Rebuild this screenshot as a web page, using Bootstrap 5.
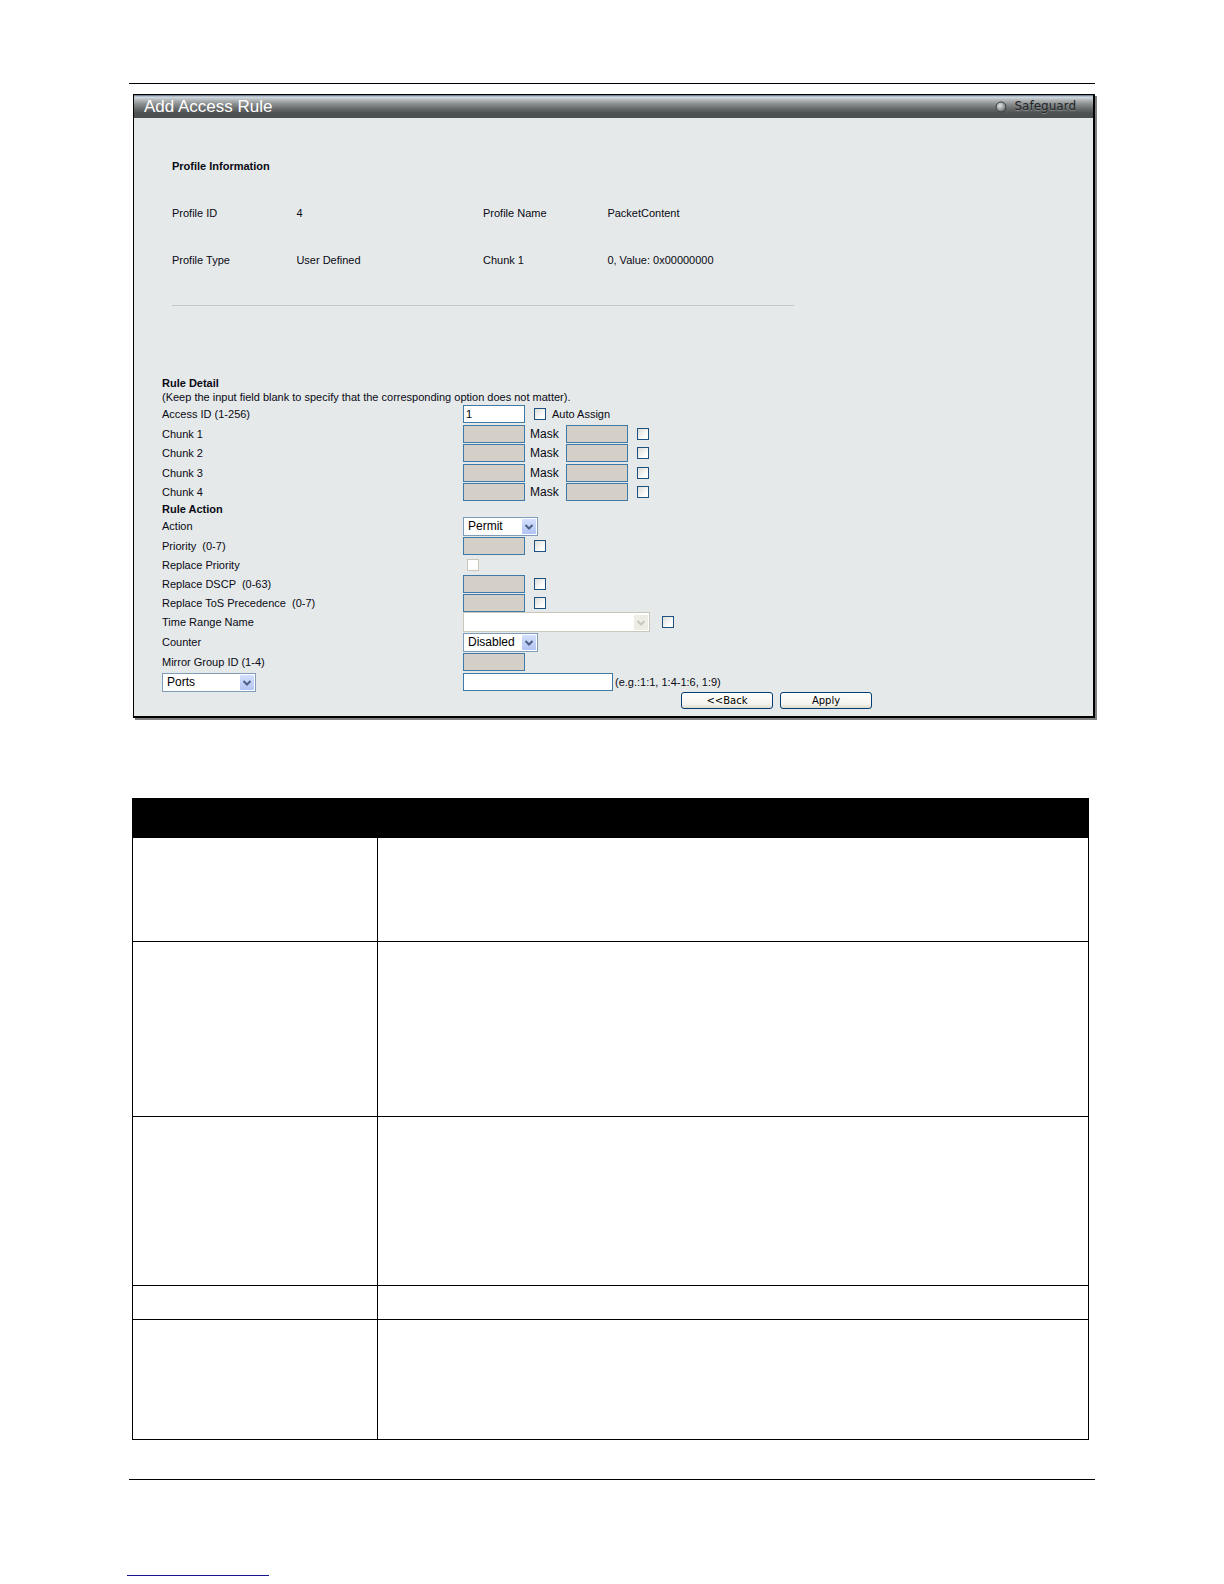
<!DOCTYPE html>
<html lang="en">
<head>
<meta charset="utf-8">
<meta name="viewport" content="width=device-width, initial-scale=1">
<title>Add Access Rule</title>
<link href="https://cdn.jsdelivr.net/npm/bootstrap@5.3.0/dist/css/bootstrap.min.css" rel="stylesheet">
<style>
  body { font-family: "Liberation Sans", Arial, sans-serif; font-size: 11px; line-height: 14px; color: #0a0a14; background: #fff; }
  .sheet { padding: 83px 129px 8px; }
  .sheet-rule { height: 1px; background: #000; }
  .panel { margin: 10px 0 0 4px; border: 1px solid #000; border-width: 1px 2px 2px 1px; background: #e5e9ea; box-shadow: 2px 2px 0 #808080; }
  .panel-title { height: 23px; padding: 0 17px 0 10px; background: linear-gradient(#56687a 0, #d3dde5 2px, #b4b7b9 5px, #8c8f90 9px, #66696a 14px, #4f5253 18px, #4b4d4e 100%); }
  .panel-title h1 { font-size: 17px; line-height: 23px; font-weight: 400; color: #fff; }
  .safeguard { font: 12px/25px "DejaVu Sans", sans-serif; color: #222527; text-shadow: 0 1px 0 #85898b; gap: 8px; }
  .panel-body { padding: 24px 28px 7px; }
  .profile { max-width: 632px; padding-left: 10px; }
  .profile-row { height: 47px; }
  .w-name { width: 20%; }
  .w-value { width: 30%; }
  .profile-line { height: 1px; margin: 22px 0 70px; background: #c3c8ca; }
  h2 { font-size: 11px; line-height: 14px; font-weight: 700; margin: 0; }
  .rule-row { height: 19px; }
  .rule-row.tall { height: 20px; }
  .rule-name { flex: 0 0 301px; white-space: pre; }
  .field { height: 18px; border: 1px solid #3f79a8; border-radius: 0; padding: 0 2px; font-size: 11px; background: #fff; color: #000; }
  .field:disabled { background: #d4d0c8; }
  .short { width: 62px; }
  .long { width: 150px; }
  .mask { font-size: 12px; width: 30px; margin: 0 6px 0 5px; }
  .tick { appearance: none; width: 12px; height: 12px; margin: 0; border: 1px solid #1c5180; border-radius: 0; background: linear-gradient(135deg, #dcdcd7, #fff 75%); flex: none; }
  .tick:disabled { border-color: #cac8bb; background: #fff; margin-left: 4px; }
  .gap-tick { margin-left: 9px; }
  .range-tick { margin-left: 12px; }
  .tick-label { margin-left: 6px; }
  .hint { margin-left: 2px; }
  .picker { appearance: none; height: 19px; border: 1px solid #7f9db9; border-radius: 0; padding: 0 18px 0 4px; font-size: 12px; line-height: 17px; color: #000; opacity: 1;
    background: #fff url("data:image/svg+xml,%3Csvg xmlns='http://www.w3.org/2000/svg' width='14' height='15'%3E%3Cdefs%3E%3ClinearGradient id='a' x2='0' y2='1'%3E%3Cstop stop-color='%23d3dffd'/%3E%3Cstop offset='1' stop-color='%23b2c4f4'/%3E%3C/linearGradient%3E%3C/defs%3E%3Crect width='14' height='15' rx='1' fill='url(%23a)'/%3E%3Cpath d='M3.5 6l3.5 3.5L10.500 6' fill='none' stroke='%234d6185' stroke-width='2'/%3E%3C/svg%3E") no-repeat right 1px center; }
  .picker:disabled { border-color: #c9c7ba;
    background: #fff url("data:image/svg+xml,%3Csvg xmlns='http://www.w3.org/2000/svg' width='14' height='15'%3E%3Crect width='14' height='15' rx='1' fill='%23eeede5'/%3E%3Cpath d='M3.5 6l3.5 3.5L10.500 6' fill='none' stroke='%23c9c7ba' stroke-width='2'/%3E%3C/svg%3E") no-repeat right 1px center; }
  .state { width: 75px; }
  .time-range { width: 187px; height: 20px; }
  .target { width: 94px; }
  .actions { max-width: 710px; gap: 7px; }
  .push { width: 92px; height: 17px; padding: 0; border: 1px solid #003c74; border-radius: 3px; background: linear-gradient(#fff, #f3f2ec 75%, #dcd8cc); font: 10px/14px "DejaVu Sans", Verdana, sans-serif; color: #000; }
  .params { width: calc(100% - 9px); margin: 80px 0 39px 3px; border-collapse: collapse; table-layout: fixed; }
  .params th, .params td { border: 1px solid #000; padding: 0; }
  .params th { background: #000; height: 39px; }
  .params col:first-child { width: 245px; }
  .h-104 { height: 104px; }
  .h-175 { height: 175px; }
  .h-169 { height: 169px; }
  .h-34 { height: 34px; }
  .h-120 { height: 120px; }
  .foot-link { width: 142px; height: 1px; margin: 95px 0 0 -2px; background: #14148c; }
</style>
<script src="https://cdn.jsdelivr.net/npm/bootstrap@5.3.0/dist/js/bootstrap.bundle.min.js"></script>
</head>
<body>
<div class="sheet">
  <div class="sheet-rule"></div>
  <main class="panel">
    <header class="panel-title d-flex justify-content-between">
      <h1 class="m-0">Add Access Rule</h1>
      <div class="safeguard d-flex align-items-center">
        <svg width="12" height="12" viewBox="0 0 12 12" aria-hidden="true">
          <defs><radialGradient id="lamp" cx=".4" cy=".35" r=".7"><stop stop-color="#e2e4e5"/><stop offset=".5" stop-color="#a6a9aa"/><stop offset="1" stop-color="#5c5f61"/></radialGradient></defs>
          <circle cx="6" cy="6" r="5" fill="url(#lamp)" stroke="#3c4042"/>
        </svg>
        <span>Safeguard</span>
      </div>
    </header>
    <form class="panel-body" onsubmit="return false">
      <section class="profile">
        <div class="profile-row d-flex align-items-center"><h2>Profile Information</h2></div>
        <div class="profile-row d-flex align-items-center">
          <div class="w-name">Profile ID</div><div class="w-value">4</div>
          <div class="w-name">Profile Name</div><div class="w-value">PacketContent</div>
        </div>
        <div class="profile-row d-flex align-items-center">
          <div class="w-name">Profile Type</div><div class="w-value">User Defined</div>
          <div class="w-name">Chunk 1</div><div class="w-value">0, Value: 0x00000000</div>
        </div>
        <div class="profile-line"></div>
      </section>

      <h2>Rule Detail</h2>
      <div>(Keep the input field blank to specify that the corresponding option does not matter).</div>
      <div class="rule-row tall d-flex align-items-center">
        <label class="rule-name" for="access">Access ID (1-256)</label>
        <input class="field short" id="access" type="text" value="1">
        <input class="tick gap-tick" id="auto" type="checkbox"><label class="tick-label" for="auto">Auto Assign</label>
      </div>
      <div class="rule-row d-flex align-items-center">
        <label class="rule-name" for="c1">Chunk 1</label>
        <input class="field short" id="c1" type="text" disabled><label class="mask" for="m1">Mask</label>
        <input class="field short" id="m1" type="text" disabled><input class="tick gap-tick" type="checkbox" aria-label="Use chunk 1">
      </div>
      <div class="rule-row tall d-flex align-items-center">
        <label class="rule-name" for="c2">Chunk 2</label>
        <input class="field short" id="c2" type="text" disabled><label class="mask" for="m2">Mask</label>
        <input class="field short" id="m2" type="text" disabled><input class="tick gap-tick" type="checkbox" aria-label="Use chunk 2">
      </div>
      <div class="rule-row d-flex align-items-center">
        <label class="rule-name" for="c3">Chunk 3</label>
        <input class="field short" id="c3" type="text" disabled><label class="mask" for="m3">Mask</label>
        <input class="field short" id="m3" type="text" disabled><input class="tick gap-tick" type="checkbox" aria-label="Use chunk 3">
      </div>
      <div class="rule-row tall d-flex align-items-center">
        <label class="rule-name" for="c4">Chunk 4</label>
        <input class="field short" id="c4" type="text" disabled><label class="mask" for="m4">Mask</label>
        <input class="field short" id="m4" type="text" disabled><input class="tick gap-tick" type="checkbox" aria-label="Use chunk 4">
      </div>

      <h2>Rule Action</h2>
      <div class="rule-row tall d-flex align-items-center">
        <label class="rule-name" for="action">Action</label>
        <select class="picker state" id="action"><option>Permit</option></select>
      </div>
      <div class="rule-row d-flex align-items-center">
        <label class="rule-name" for="prio">Priority  (0-7)</label>
        <input class="field short" id="prio" type="text" disabled><input class="tick gap-tick" type="checkbox" aria-label="Use priority">
      </div>
      <div class="rule-row d-flex align-items-center">
        <label class="rule-name" for="rprio">Replace Priority</label>
        <input class="tick" id="rprio" type="checkbox" disabled>
      </div>
      <div class="rule-row d-flex align-items-center">
        <label class="rule-name" for="dscp">Replace DSCP  (0-63)</label>
        <input class="field short" id="dscp" type="text" disabled><input class="tick gap-tick" type="checkbox" aria-label="Use DSCP">
      </div>
      <div class="rule-row d-flex align-items-center">
        <label class="rule-name" for="tos">Replace ToS Precedence  (0-7)</label>
        <input class="field short" id="tos" type="text" disabled><input class="tick gap-tick" type="checkbox" aria-label="Use ToS precedence">
      </div>
      <div class="rule-row tall d-flex align-items-center">
        <label class="rule-name" for="range">Time Range Name</label>
        <select class="picker time-range" id="range" disabled><option></option></select>
        <input class="tick range-tick" type="checkbox" aria-label="Use time range">
      </div>
      <div class="rule-row tall d-flex align-items-center">
        <label class="rule-name" for="counter">Counter</label>
        <select class="picker state" id="counter"><option>Disabled</option></select>
      </div>
      <div class="rule-row tall d-flex align-items-center">
        <label class="rule-name" for="mirror">Mirror Group ID (1-4)</label>
        <input class="field short" id="mirror" type="text" disabled>
      </div>
      <div class="rule-row tall d-flex align-items-center">
        <div class="rule-name"><select class="picker target" aria-label="Target"><option>Ports</option></select></div>
        <input class="field long" id="ports" type="text"><label class="hint" for="ports">(e.g.:1:1, 1:4-1:6, 1:9)</label>
      </div>
      <div class="actions d-flex justify-content-end">
        <button class="push" type="button">&lt;&lt;Back</button>
        <button class="push" type="submit">Apply</button>
      </div>
    </form>
  </main>

  <table class="params">
    <colgroup><col><col></colgroup>
    <thead><tr><th></th><th></th></tr></thead>
    <tbody>
      <tr class="h-104"><td></td><td></td></tr>
      <tr class="h-175"><td></td><td></td></tr>
      <tr class="h-169"><td></td><td></td></tr>
      <tr class="h-34"><td></td><td></td></tr>
      <tr class="h-120"><td></td><td></td></tr>
    </tbody>
  </table>
  <div class="sheet-rule"></div>
  <a class="foot-link d-block" href="#" aria-label="Back to top"></a>
</div>
</body>
</html>
